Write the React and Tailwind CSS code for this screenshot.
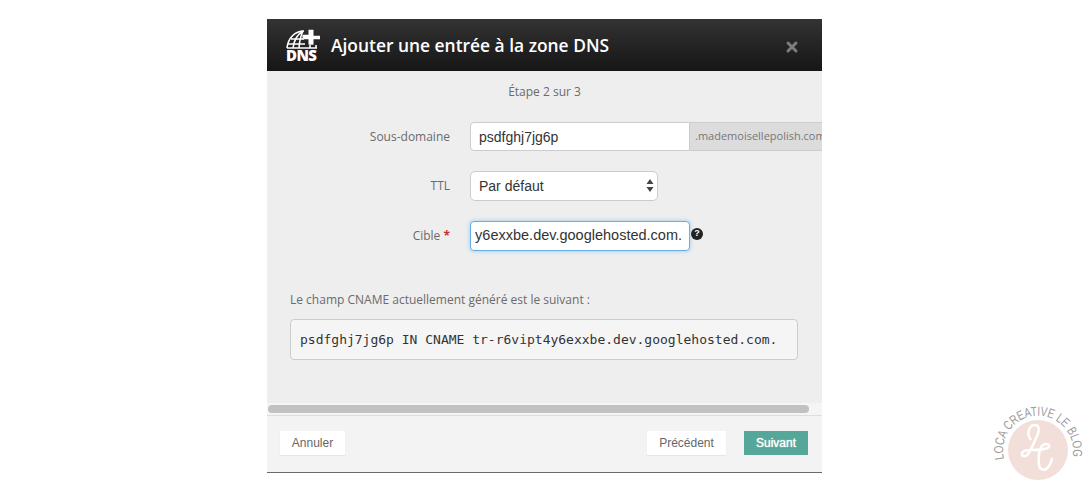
import { X } from 'lucide-react'

const labelClass = "w-[183px] shrink-0 text-right text-[12px] text-[#6b6b6b] font-['Open_Sans',sans-serif]"

function DnsLogo() {
  return (
    <div className="relative h-[40px] w-[36px] shrink-0">
      <svg width="36" height="26" viewBox="0 0 36 26" fill="none" stroke="white" strokeWidth="1.6" className="block">
        <path d="M2 23C3 13 10 6 19 6" />
        <path d="M8 23C9 15 13 9 18 6M14 23c.4-6 1.500-12 4-17" />
        <path d="M6 14h13M3 19h17M2 23h30" />
        <path d="M25 23v-3M31 23v-3" />
        <path d="M24.500 6.500h5v6.500h6.500v-1 5h-6.500v6h-5v-6h-6v-5h6z" transform="translate(-1 -1) scale(1 0.9)" fill="white" stroke="none" />
      </svg>
      <span className="absolute left-[1px] top-[23px] text-[15px] leading-none font-extrabold tracking-[-0.6px] text-white font-['Open_Sans',sans-serif]">DNS</span>
    </div>
  )
}

function Watermark() {
  return (
    <svg width="100" height="92" viewBox="0 0 100 92" className="shrink-0">
      <circle cx="50" cy="50" r="30" fill="#f3dfd9" />
      <path
        d="M43 40C38 34 41 25 47 25C51 25 52 30 49 36C46 43 43 50 40 54C38 57 34 57 34 54C34 51 38 50 42 50C50 50 58 50 61 47C62 44 58 43 55 45C51 48 50 58 51 65C52 71 58 71 61 66C63 63 64 60 64 58"
        fill="none"
        stroke="white"
        strokeWidth="2.500"
      />
      <defs>
        <path id="ring" d="M16 59A35 35 0 1 1 84 59" />
      </defs>
      <text className="font-['Liberation_Sans',sans-serif]" fontSize="13" fill="#9c9c9c">
        <textPath href="#ring" textLength="124" lengthAdjust="spacingAndGlyphs">LOCA CREATIVE LE BLOG</textPath>
      </text>
    </svg>
  )
}

export default function App() {
  return (
    <div className="flex h-[492px] w-[1090px] overflow-hidden bg-white pl-[267px] pt-[19px]">
      <div className="flex h-[454px] w-[555px] shrink-0 flex-col overflow-hidden border-b border-[#6a6a6a] bg-[#eee]">
        <div className="flex h-[52px] shrink-0 items-center bg-gradient-to-b from-[#333] to-[#161616] pl-[18px] pr-[22px]">
          <DnsLogo />
          <h1 className="ml-[10px] text-[17.400px] font-semibold text-white font-['Open_Sans',sans-serif]">Ajouter une entrée à la zone DNS</h1>
          <X size={16} strokeWidth={4.500} className="ml-auto mt-[3px] text-[#7d7d7d]" />
        </div>

        <div className="flex h-[332px] shrink-0 flex-col">
          <p className="mt-[12px] text-center text-[12px] leading-[18px] text-[#6b6b6b] font-['Open_Sans',sans-serif]">Étape 2 sur 3</p>

          <div className="mt-[21px] flex items-center">
            <label className={labelClass}>Sous-domaine</label>
            <div className="ml-[20px] flex shrink-0">
              <input readOnly value="psdfghj7jg6p" className="h-[29px] w-[220px] rounded-l-[4px] border border-[#ccc] bg-white px-2 text-[14px] text-[#333] outline-none font-['Liberation_Sans',sans-serif]" />
              <span className="flex h-[29px] w-[140px] shrink-0 items-center border-y border-[#ccc] bg-[#dcdcdc] px-[5px] text-[11px] whitespace-nowrap text-[#777] font-['Open_Sans',sans-serif]">.mademoisellepolish.com</span>
            </div>
          </div>

          <div className="mt-[20px] flex items-center">
            <label className={labelClass}>TTL</label>
            <div className="relative ml-[20px]">
              <select className="h-[30px] w-[188px] appearance-none rounded-[5px] border border-[#ccc] bg-white px-2 text-[14px] text-[#333] outline-none font-['Liberation_Sans',sans-serif]">
                <option>Par défaut</option>
              </select>
              <svg width="8" height="13" viewBox="0 0 8 13" className="pointer-events-none absolute right-[4px] top-[8px]" fill="#444">
                <path d="M4 0l3.500 5H.5zM4 13L.5 8h7z" />
              </svg>
            </div>
          </div>

          <div className="mt-[20px] flex items-center">
            <label className={labelClass}>Cible <span className="font-bold text-[#c9302c]">*</span></label>
            <div className="ml-[20px] flex h-[30px] w-[220px] shrink-0 items-center rounded-[4px] border border-[#66afe9] bg-white pl-[4px] pr-[7px] text-[14.500px] text-[#333] shadow-[0_0_4px_rgba(102,175,233,0.6)] font-['Liberation_Sans',sans-serif]">
              <div className="flex min-w-0 flex-1 justify-end overflow-hidden whitespace-nowrap">
                <span className="shrink-0">tr-r6vipt4y6exxbe.dev.googlehosted.com.</span>
              </div>
            </div>
            <span className="mb-[4px] ml-[1px] flex h-[12px] w-[12px] items-center justify-center rounded-full bg-[#222] text-[9px] font-bold text-white font-['Liberation_Sans',sans-serif]">?</span>
          </div>

          <p className="ml-[23px] mt-[40px] text-[12px] leading-[18px] text-[#6b6b6b] font-['Open_Sans',sans-serif]">Le champ CNAME actuellement généré est le suivant :</p>

          <pre className="ml-[23px] mt-[10px] flex h-[41px] w-[508px] items-center rounded-[4px] border border-[#ccc] bg-[#f5f5f5] px-[9px] text-[13px] text-[#333] font-['DejaVu_Sans_Mono',monospace]">psdfghj7jg6p IN CNAME tr-r6vipt4y6exxbe.dev.googlehosted.com.</pre>
        </div>

        <div className="flex h-[12px] shrink-0 items-center bg-[#f5f5f5] pl-[1px] pr-[13px]">
          <div className="h-[8px] w-full rounded-full bg-[#c1c1c1]" />
        </div>

        <div className="flex flex-1 items-center border-t border-[#ddd] bg-[#f3f3f3] px-[13px] pb-[2px] text-[12px] font-['Liberation_Sans',sans-serif]">
          <button className="h-[24px] w-[65px] bg-white text-[#666] shadow-[0_1px_1px_rgba(0,0,0,0.05)]">Annuler</button>
          <button className="ml-auto h-[24px] w-[79px] bg-white text-[#666] shadow-[0_1px_1px_rgba(0,0,0,0.05)]">Précédent</button>
          <button className="ml-[18px] mr-[1px] h-[24px] w-[64px] bg-[#55a899] text-white [text-shadow:0_0_1px_white]">Suivant</button>
        </div>
      </div>

      <div className="ml-[166px] mt-[381px]">
        <Watermark />
      </div>
    </div>
  )
}
